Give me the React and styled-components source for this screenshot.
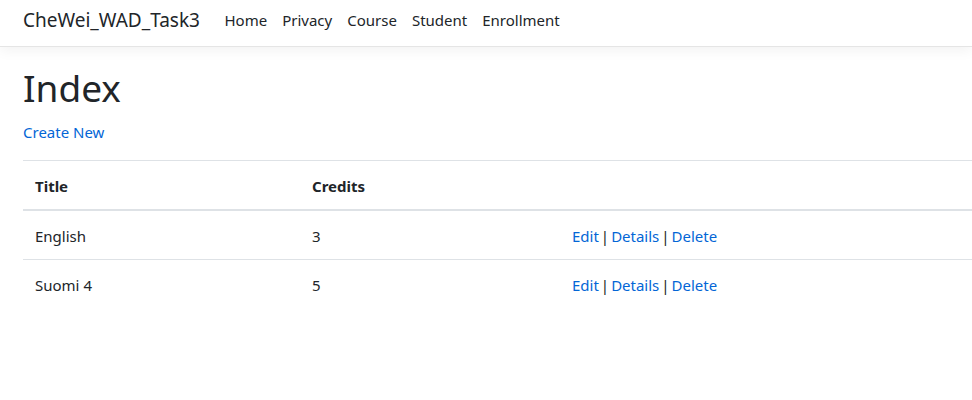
import React from 'react'
import styled, { createGlobalStyle } from 'styled-components'

const GlobalStyle = createGlobalStyle`
  html, body {
    margin: 0;
    padding: 0;
    background: #fff;
    overflow-x: hidden;
  }
  body {
    font-family: "Segoe UI", "Noto Sans", "Liberation Sans", sans-serif;
    font-size: 15px;
    line-height: 24px;
    color: #212529;
  }
`

const Navbar = styled.header`
  height: 41px;
  display: flex;
  align-items: flex-start;
  padding: 5px 0 0 23px;
  background: #fff;
  border-bottom: 1px solid #e5e5e5;
  box-shadow: 0 4px 12px rgba(0, 0, 0, 0.05);
`
const Brand = styled.a`
  font-size: 19px;
  line-height: 30px;
  color: #212529;
  margin-right: 17px;
  text-decoration: none;
`
const Nav = styled.nav`
  display: flex;
  line-height: 30px;
`
const NavLink = styled.a`
  padding: 0 7.5px;
  color: #212529;
  text-decoration: none;
`
const Main = styled.main`
  padding: 17px 0 16px 23px;
`
const Heading = styled.h1`
  font-size: 37px;
  font-weight: 400;
  line-height: 48px;
  margin: 0 0 8px;
`
const Para = styled.p`
  margin: 0 0 16px;
`
const Link = styled.a`
  color: #0366d6;
  text-decoration: none;
`
const Table = styled.table`
  width: 100%;
  border-collapse: collapse;
`
const Th = styled.th`
  text-align: left;
  font-weight: 700;
  padding: 13px 12px 11px;
  border-top: 1px solid #dee2e6;
  border-bottom: 2px solid #dee2e6;
  width: ${p => p.$w || 'auto'};
`
const Td = styled.td`
  padding: 13px 12px 11px;
  border-top: 1px solid #dee2e6;
`
const Sep = styled.span`
  margin: 0 2px;
`

const courses = [
  { title: 'English', credits: 3 },
  { title: 'Suomi 4', credits: 5 },
]

export default function App() {
  return (
    <>
      <GlobalStyle />
      <Navbar>
        <Brand href="#">CheWei_WAD_Task3</Brand>
        <Nav>
          <NavLink href="#">Home</NavLink>
          <NavLink href="#">Privacy</NavLink>
          <NavLink href="#">Course</NavLink>
          <NavLink href="#">Student</NavLink>
          <NavLink href="#">Enrollment</NavLink>
        </Nav>
      </Navbar>
      <Main>
        <Heading>Index</Heading>
        <Para>
          <Link href="#">Create New</Link>
        </Para>
        <Table>
          <thead>
            <tr>
              <Th $w="253px">Title</Th>
              <Th $w="236px">Credits</Th>
              <Th></Th>
            </tr>
          </thead>
          <tbody>
            {courses.map(c => (
              <tr key={c.title}>
                <Td>{c.title}</Td>
                <Td>{c.credits}</Td>
                <Td>
                  <Link href="#">Edit</Link>
                  <Sep>|</Sep>
                  <Link href="#">Details</Link>
                  <Sep>|</Sep>
                  <Link href="#">Delete</Link>
                </Td>
              </tr>
            ))}
          </tbody>
        </Table>
      </Main>
    </>
  )
}
